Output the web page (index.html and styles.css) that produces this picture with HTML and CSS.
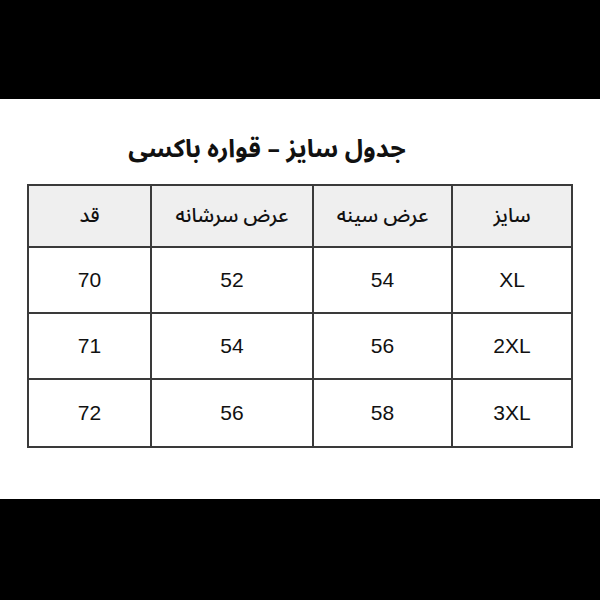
FILE: index.html
```html
<!DOCTYPE html>
<html lang="fa">
<head>
<meta charset="utf-8">
<link rel="stylesheet" href="styles.css">
</head>
<body>
<div class="bar top"></div>
<main class="sheet" dir="rtl">
  <h1 class="title">جدول سایز – قواره باکسی</h1>
  <table class="sizes">
    <colgroup>
      <col class="c1"><col class="c2"><col class="c3"><col class="c4">
    </colgroup>
    <thead>
      <tr><th>سایز</th><th>عرض سینه</th><th>عرض سرشانه</th><th>قد</th></tr>
    </thead>
    <tbody>
      <tr class="r1"><td>XL</td><td>54</td><td>52</td><td>70</td></tr>
      <tr class="r2"><td>2XL</td><td>56</td><td>54</td><td>71</td></tr>
      <tr class="r3"><td>3XL</td><td>58</td><td>56</td><td>72</td></tr>
    </tbody>
  </table>
</main>
<div class="bar bottom"></div>
</body>
</html>
```
FILE: styles.css
```css
html, body {
  margin: 0;
  padding: 0;
  background: #000;
}
body {
  width: 600px;
  height: 600px;
  display: flex;
  flex-direction: column;
}
.bar {
  background: #000;
}
.bar.top { height: 99px; }
.bar.bottom { flex: 1; }
.sheet {
  height: 400px;
  background: #fff;
  display: flex;
  flex-direction: column;
  align-items: center;
  box-sizing: border-box;
}
.title {
  margin: 28px 66px 0 0;
  font-family: "Noto Sans Arabic", "Noto Sans Arabic UI", "DejaVu Sans", sans-serif;
  font-weight: bold;
  font-size: 25px;
  line-height: 44px;
  color: #111;
}
.sizes {
  margin-top: 13px;
  width: 544px;
  border-collapse: collapse;
  font-family: "Liberation Sans", "DejaVu Sans", sans-serif;
  color: #111;
  table-layout: fixed;
}
.c1 { width: 120px; }
.c2 { width: 139px; }
.c3 { width: 162px; }
.c4 { width: 123px; }
.sizes th, .sizes td {
  border: 2px solid #3a3a3a;
  text-align: center;
  padding: 0;
}
.sizes th {
  background: #efefef;
  font-family: "Noto Sans Arabic", "Noto Sans Arabic UI", "DejaVu Sans", sans-serif;
  font-weight: 500;
  font-size: 20px;
  height: 60px;
}
.sizes td {
  font-size: 21px;
  height: 64px;
}
.sizes tr.r3 td { height: 66px; }
```
